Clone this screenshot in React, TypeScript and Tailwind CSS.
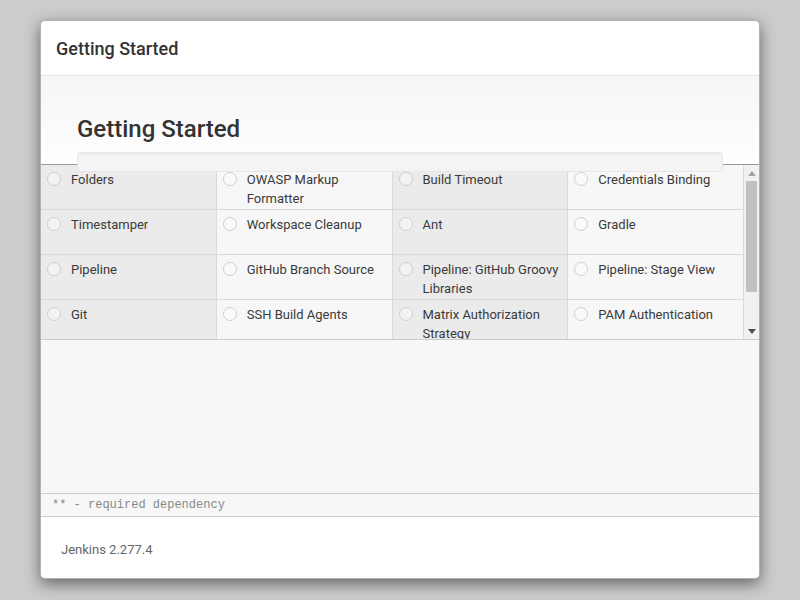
const plugins = [
    "Folders",
    "OWASP Markup Formatter",
    "Build Timeout",
    "Credentials Binding",
    "Timestamper",
    "Workspace Cleanup",
    "Ant",
    "Gradle",
    "Pipeline",
    "GitHub Branch Source",
    "Pipeline: GitHub Groovy Libraries",
    "Pipeline: Stage View",
    "Git",
    "SSH Build Agents",
    "Matrix Authorization Strategy",
    "PAM Authentication",
];

function PluginCell({ name, index }: { name: string; index: number }) {
    // odd columns (1st, 3rd) are shaded darker
    const dark = index % 2 === 0;
    return (
        <div
            className={`flex h-[45px] shrink-0 items-start border-b border-r border-[#d9d9d9] pt-[5px] pr-[8px] pl-[6px] ${
                dark ? "bg-[#ebebeb]" : "bg-[#f7f7f7]"
            }`}
        >
            <span className="mt-[2px] h-[14px] w-[14px] shrink-0 rounded-full border-[1.5px] border-[#d0d0d0] bg-white/40" />
            <span className="ml-[10px] text-[13px] leading-[19px] text-[#3a3a3a]">{name}</span>
        </div>
    );
}

function Scrollbar() {
    return (
        <div className="flex w-[15px] shrink-0 flex-col items-center bg-[#f1f1f1]">
            <div className="flex h-[16px] w-full items-center justify-center">
                <svg width="8" height="5" viewBox="0 0 8 5">
                    <path d="M0 5 L4 0 L8 5 Z" fill="#a3a3a3" />
                </svg>
            </div>
            <div className="h-[111px] w-[11px] bg-[#c1c1c1]" />
            <div className="flex-1" />
            <div className="flex h-[16px] w-full items-center justify-center">
                <svg width="8" height="5" viewBox="0 0 8 5">
                    <path d="M0 0 L8 0 L4 5 Z" fill="#505050" />
                </svg>
            </div>
        </div>
    );
}

export default function App() {
    return (
        <div
            className="h-[600px] w-[800px] bg-[#cccccc] pt-[20px]"
            style={{ fontFamily: "Roboto, 'Liberation Sans', sans-serif" }}
        >
            <div className="ml-[40px] w-[720px] overflow-hidden rounded-[5px] border border-black/30 bg-white shadow-[0_5px_15px_rgba(0,0,0,0.5)]">
                {/* Header */}
                <div className="h-[55px] border-b border-[#e5e5e5] px-[15px] pt-[15px]">
                    <h4 className="text-[18px] font-medium leading-[26px] text-[#333]">Getting Started</h4>
                </div>

                {/* Jumbotron */}
                <div className="bg-gradient-to-b from-[#f6f6f6] to-white px-[36px] pt-[38px]">
                    <h1 className="text-[24px] font-medium leading-[30px] text-[#333]">Getting Started</h1>
                    <div className="relative z-10 mt-[8px] -mb-[8px] h-[20px] rounded-[4px] border border-[#e8e8e8] bg-[#f4f4f4] shadow-[inset_0_1px_2px_rgba(0,0,0,0.06)]" />
                </div>

                {/* Plugin grid */}
                <div className="flex h-[176px] overflow-hidden border-t border-b border-t-[#9a9a9a] border-b-[#cccccc]">
                    <div className="grid flex-1 grid-cols-4 content-start">
                        {plugins.map((p, i) => (
                            <PluginCell key={p} name={p} index={i} />
                        ))}
                    </div>
                    <Scrollbar />
                </div>

                <div className="h-[153px] bg-[#f7f7f7]" />

                <div
                    className="border-t border-b border-[#cccccc] bg-[#f7f7f7] px-[11px] text-[12px] leading-[22px] text-[#888]"
                    style={{ fontFamily: "'Liberation Mono', monospace" }}
                >
                    ** - required dependency
                </div>

                {/* Footer */}
                <div className="px-[20px] pt-[23px] pb-[18px] text-[13px] leading-[20px] text-[#666]">
                    Jenkins 2.277.4
                </div>
            </div>
        </div>
    );
}
